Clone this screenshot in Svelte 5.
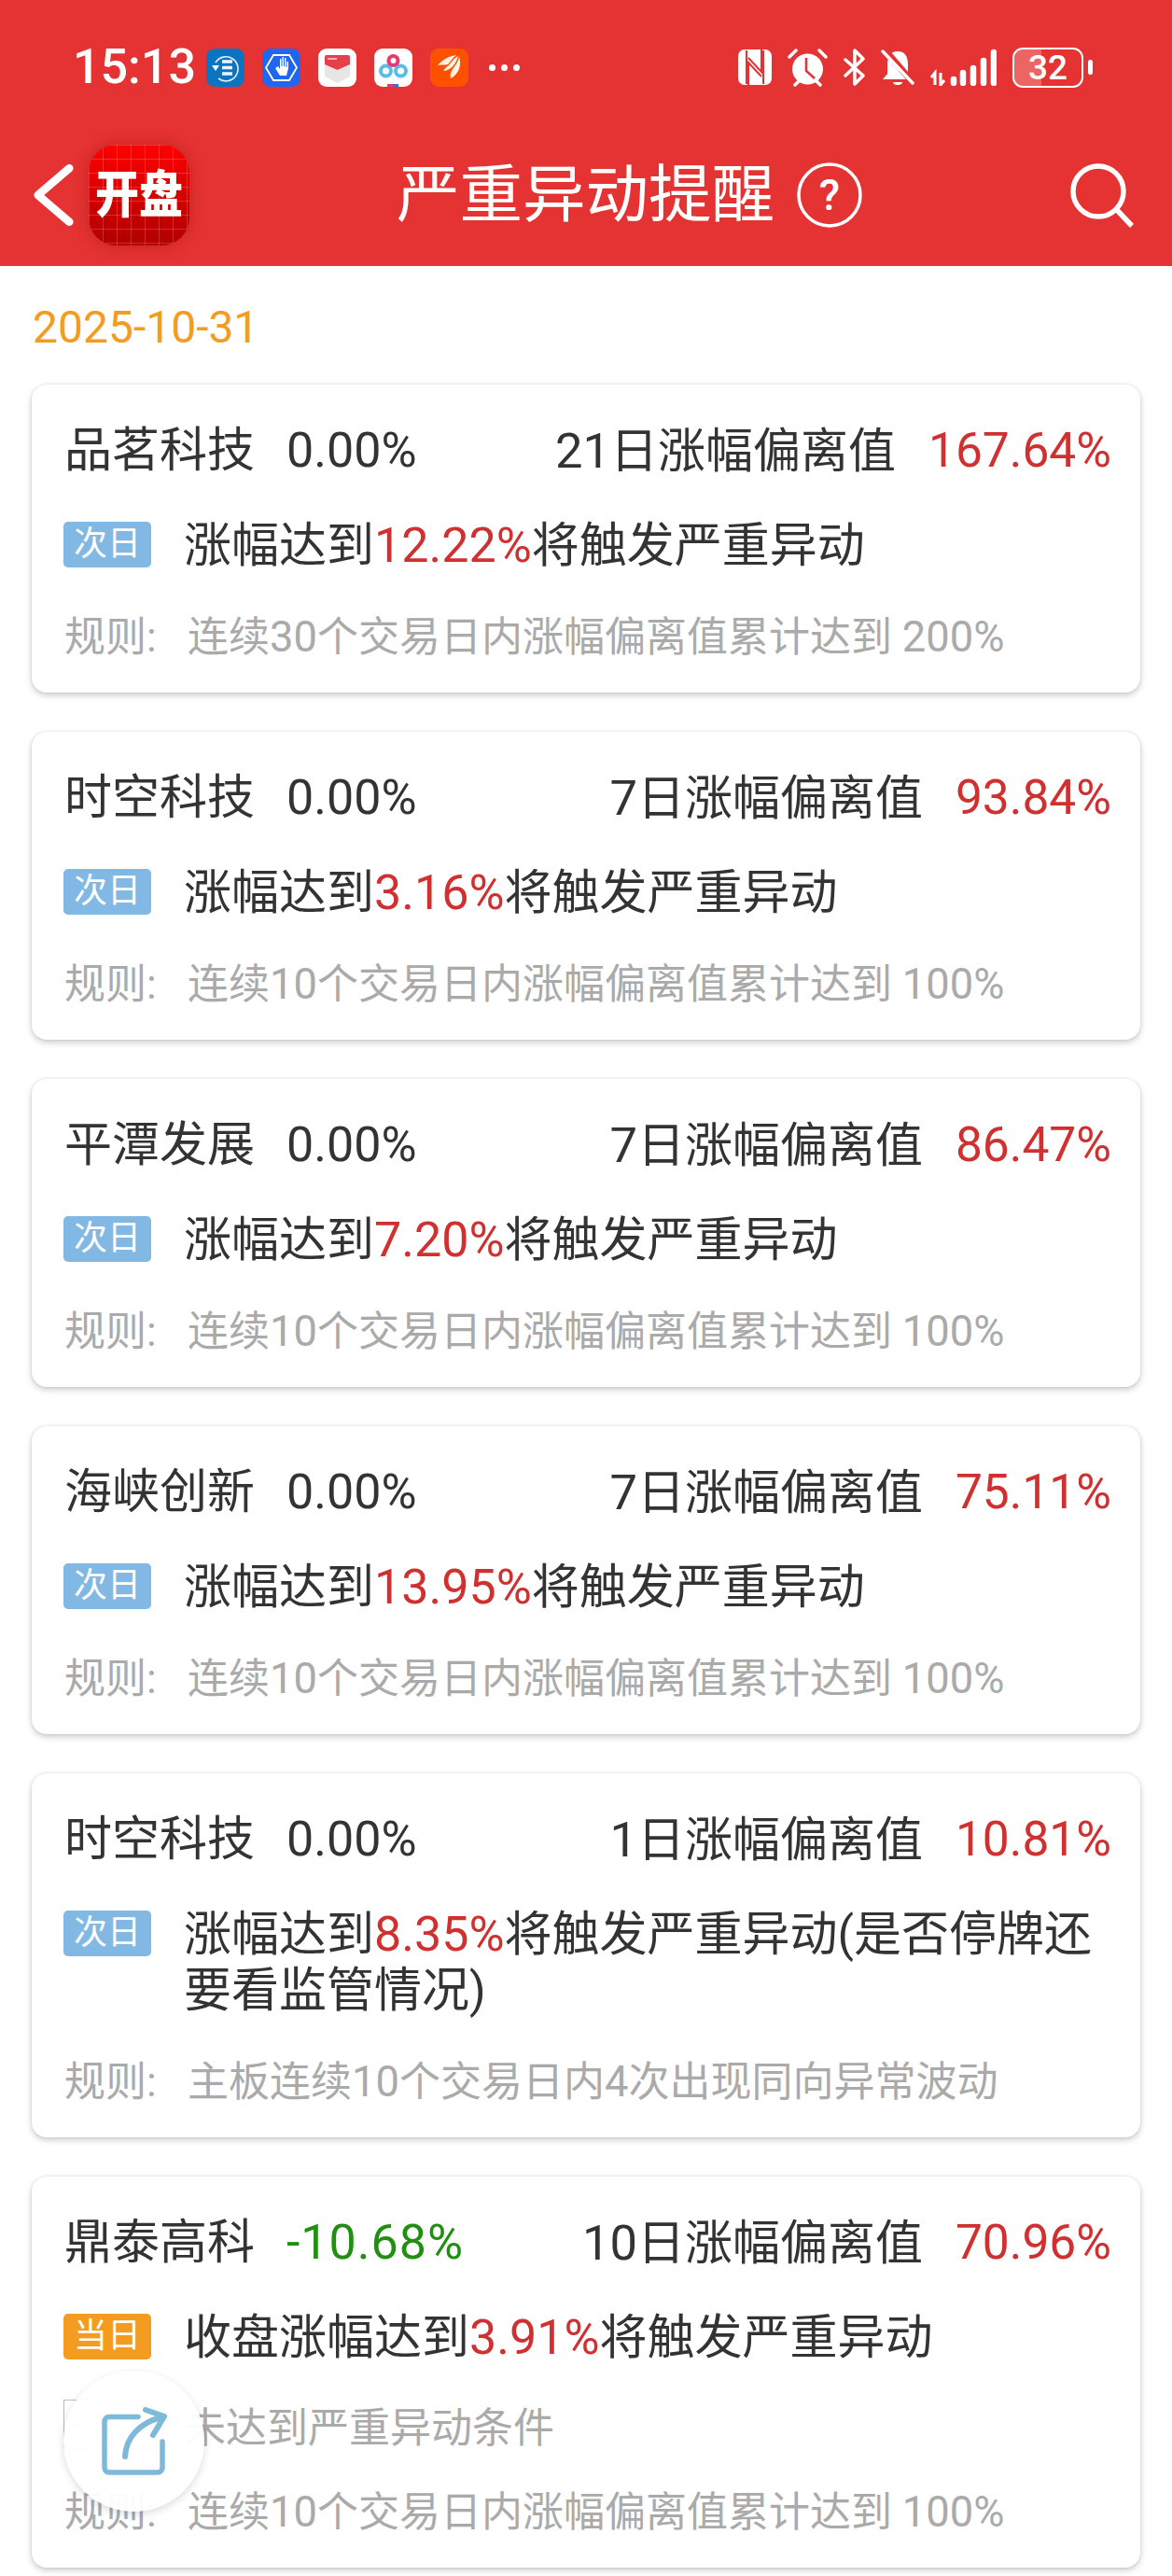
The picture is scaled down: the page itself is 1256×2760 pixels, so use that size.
<script>
  const cards = [
    { name: '品茗科技', pct: '0.00%', label: '21日涨幅偏离值', val: '167.64%', pre: '涨幅达到', hit: '12.22%', post: '将触发严重异动', rule: '连续30个交易日内涨幅偏离值累计达到 200%' },
    { name: '时空科技', pct: '0.00%', label: '7日涨幅偏离值', val: '93.84%', pre: '涨幅达到', hit: '3.16%', post: '将触发严重异动', rule: '连续10个交易日内涨幅偏离值累计达到 100%' },
    { name: '平潭发展', pct: '0.00%', label: '7日涨幅偏离值', val: '86.47%', pre: '涨幅达到', hit: '7.20%', post: '将触发严重异动', rule: '连续10个交易日内涨幅偏离值累计达到 100%' },
    { name: '海峡创新', pct: '0.00%', label: '7日涨幅偏离值', val: '75.11%', pre: '涨幅达到', hit: '13.95%', post: '将触发严重异动', rule: '连续10个交易日内涨幅偏离值累计达到 100%' },
    { name: '时空科技', pct: '0.00%', label: '1日涨幅偏离值', val: '10.81%', pre: '涨幅达到', hit: '8.35%', post: '将触发严重异动(是否停牌还要看监管情况)', rule: '主板连续10个交易日内4次出现同向异常波动' },
    { name: '鼎泰高科', pct: '-10.68%', down: true, label: '10日涨幅偏离值', val: '70.96%', today: true, pre: '收盘涨幅达到', hit: '3.91%', post: '将触发严重异动', note: '未达到严重异动条件', rule: '连续10个交易日内涨幅偏离值累计达到 100%' }
  ];
  const parts = (s) => s.split(/([0-9%]+)/).map((t, i) => ({ t, num: i % 2 === 1 }));
</script>

{#snippet mixed(s)}{#each parts(s) as p}{#if p.num}<span class="n">{p.t}</span>{:else}{p.t}{/if}{/each}{/snippet}

<div class="screen">
  <header class="head">
    <div class="status">
      <span class="time">15:13</span>
      <div class="apps">
        <svg class="app" viewBox="0 0 41 41"><rect width="41" height="41" rx="9" fill="#0b74c0"/><path d="M10 15a13 13 0 1 1 3 17" fill="none" stroke="#d8efff" stroke-width="1.600"/><path d="M6 18h8l-4 6z" fill="#fff"/><path d="M17 14h11M17 20.500h11M17 27h11" stroke="#e8f5ff" stroke-width="3.500"/></svg>
        <svg class="app" viewBox="0 0 41 41"><rect width="41" height="41" rx="9" fill="#1f66f0"/><path d="M12 7h17l8 13.500-8 13.500H12L4 20.500z" fill="none" stroke="#fff" stroke-width="1.800"/><path d="M14 21l5 8h7l2-8v-7h-1.500v6h-1V10h-1.500v9h-1V9h-1.500v10h-1v-8h-1.500v11l-2-3z" fill="#fff"/></svg>
        <svg class="app" viewBox="0 0 41 41"><rect width="41" height="41" rx="9" fill="#fff"/><path d="M7 17l13.500 6L34 17v13l-13.500 7L7 30z" fill="#e6e6e6"/><path d="M7 9a2 2 0 0 1 2-2h23a2 2 0 0 1 2 2v8l-13.500 6L7 17z" fill="#e8404a"/><path d="M10 11h10" stroke="#ffd5d5" stroke-width="1.500"/></svg>
        <svg class="app" viewBox="0 0 41 41"><rect width="41" height="41" rx="9" fill="#fff"/><circle cx="12.500" cy="24" r="5.500" fill="none" stroke="#58bde8" stroke-width="4"/><circle cx="28.500" cy="24" r="5.500" fill="none" stroke="#58bde8" stroke-width="4"/><circle cx="20.500" cy="13" r="5" fill="none" stroke="#e6396e" stroke-width="4"/><rect x="14" y="38" width="6" height="3" fill="#e6396e"/><rect x="20" y="38" width="6" height="3" fill="#3c6fd8"/></svg>
        <svg class="app" viewBox="0 0 41 41"><rect width="41" height="41" rx="9" fill="#ff5000"/><path d="M8 18c6-7 13-10 20-11-4 3-7 8-9 10-4 1-8 0-11 1z" fill="#fff3e4"/><path d="M14 24c2-3 4-5 6-6 3-4 6-8 10-10-2 6-4 10-8 13-3 2-5 3-8 3z" fill="#fff3e4"/><path d="M22 32c-1-3 0-7 2-10 3-4 6-8 7-13 3 8 0 18-9 23z" fill="#fff3e4"/></svg>
        <span class="dots"><i></i><i></i><i></i></span>
      </div>
      <div class="sys">
        <svg class="nfc" viewBox="0 0 36 38"><rect width="36" height="38" rx="7" fill="#fff"/><path d="M11 38V14l14 15M25 0v24L11 9M9 1v36M27 1v36" fill="none" stroke="#e53232" stroke-width="2"/></svg>
        <svg class="alarm" viewBox="0 0 43 44"><circle cx="21.500" cy="24" r="16.500" fill="#fff"/><path d="M20 12v14l9 8" fill="none" stroke="#e53232" stroke-width="2.500"/><path d="M2 11l7-7M41 11l-7-7M8 41l4-4M35 41l-4-4" stroke="#fff" stroke-width="3.500" stroke-linecap="round"/></svg>
        <svg class="bt" viewBox="0 0 25 40"><path d="M3 12l19 17-9 9V2l9 9L3 29" fill="none" stroke="#fff" stroke-width="3.500" stroke-linejoin="round" stroke-linecap="round"/></svg>
        <svg class="bell" viewBox="0 0 36 40"><path d="M18 3c8 0 11 6 11 14v10l5 6H2l5-6V17C7 9 10 3 18 3z" fill="#fff"/><path d="M13 36a5 3 0 0 0 10 0z" fill="#fff"/><path d="M3 0l31 36" stroke="#e53232" stroke-width="7"/><path d="M2 3l32 34" stroke="#fff" stroke-width="3.500" stroke-linecap="round"/></svg>
        <svg class="signal" viewBox="0 0 72 40"><path d="M6 39V26l-4 5M12 26v13l4-5" stroke="#fff" stroke-width="3" fill="none"/><g stroke="#fff" stroke-width="6.500" stroke-linecap="round"><path d="M26 33v4M36 26v11M47 21v16M58 13v24M69 4v33"/></g></svg>
        <div class="batt"><div class="fill"></div><span>32</span></div>
        <i class="tip"></i>
      </div>
    </div>
    <div class="nav">
      <svg class="back" viewBox="0 0 48 72"><path d="M42 6L7 36l35 30" fill="none" stroke="#fff" stroke-width="9" stroke-linecap="round" stroke-linejoin="round"/></svg>
      <div class="logo"><b>开盘</b></div>
      <div class="title"><h1>严重异动提醒</h1>
        <svg class="help" viewBox="0 0 70 70"><circle cx="35" cy="35" r="33" fill="none" stroke="#fff" stroke-width="3.500"/><text x="35" y="51" text-anchor="middle" fill="#fff" font-size="46" font-weight="500" font-family="Roboto">?</text></svg>
      </div>
      <svg class="search" viewBox="0 0 70 70"><circle cx="31" cy="31" r="27" fill="none" stroke="#fff" stroke-width="5.500"/><path d="M51 51l16 17" stroke="#fff" stroke-width="5.500"/></svg>
    </div>
  </header>

  <div class="date">2025-10-31</div>

  <main class="list">
    {#each cards as c}
      <section class="card">
        <div class="top">
          <span class="name">{c.name}</span>
          <span class="pct" class:down={c.down}>{c.pct}</span>
          <span class="label">{@render mixed(c.label)}</span>
          <span class="val">{c.val}</span>
        </div>
        <div class="mid">
          <span class="tag" class:today={c.today}>{c.today ? '当日' : '次日'}</span>
          <p>{c.pre}<em>{c.hit}</em>{c.post}</p>
        </div>
        {#if c.note}
          <div class="note">
            <svg class="spark" viewBox="0 0 112 53"><rect x=".5" y=".5" width="111" height="52" fill="#fff" stroke="#bbb"/><path d="M4 38c8-18 14-14 20-2s12 6 18-8 14-14 20-6 14 10 22 2 14-6 24-4" fill="none" stroke="#ccc" stroke-width="2"/></svg>
            <span>{c.note}</span>
          </div>
        {/if}
        <div class="rule"><span>规则:</span><span>{@render mixed(c.rule)}</span></div>
      </section>
    {/each}
  </main>

  <div class="float">
    <svg viewBox="0 0 70 74"><path d="M39 10.500H8a5 5 0 0 0-5 5V65a5 5 0 0 0 5 5h52a5 5 0 0 0 5-5V37" fill="none" stroke="#7fb9d9" stroke-width="5.500" stroke-linecap="round"/><path d="M25 53C26 33 40 17 64 11" fill="none" stroke="#7fb9d9" stroke-width="6" stroke-linecap="round"/><path d="M47 3l20 7-12 20" fill="none" stroke="#7fb9d9" stroke-width="6" stroke-linecap="round" stroke-linejoin="round"/></svg>
  </div>
</div>

<style>
  :global(body) { margin: 0; background: #fff; }
  .screen { position: relative; width: 1256px; height: 2760px; overflow: hidden; background: #fff; font-family: Roboto, "Noto Sans CJK SC", sans-serif; color: #333; }
  .head { height: 285px; background: #e53232; color: #fff; box-sizing: border-box; padding-top: 50px; }
  .status { display: flex; align-items: center; height: 44px; padding-left: 78px; }
  .time { font-size: 52px; font-weight: 500; line-height: 44px; width: 143px; }
  .apps { display: flex; align-items: center; gap: 19px; width: 570px; }
  .app { width: 41px; height: 41px; flex: none; }
  .dots { display: flex; gap: 6px; margin-left: 3px; }
  .dots i { width: 7px; height: 7px; border-radius: 50%; background: #fff; }
  .sys { display: flex; align-items: center; }
  .nfc { width: 36px; height: 38px; margin-right: 17px; }
  .alarm { width: 43px; height: 44px; margin-right: 16px; }
  .bt { width: 25px; height: 40px; margin-right: 16px; }
  .bell { width: 36px; height: 40px; margin-right: 16px; }
  .signal { width: 72px; height: 40px; margin-right: 17px; }
  .batt { position: relative; width: 76px; height: 43px; box-sizing: border-box; border: 2.500px solid #fff; border-radius: 11px; overflow: hidden; display: flex; align-items: center; justify-content: center; font-size: 37px; font-weight: 500; }
  .batt .fill { position: absolute; left: 0; top: 0; bottom: 0; width: 40%; background: rgba(255,255,255,.25); }
  .batt span { position: relative; }
  .tip { width: 5px; height: 16px; border-radius: 3px; background: #fff; margin-left: 5px; }
  .nav { position: relative; display: flex; align-items: center; height: 108px; margin-top: 61px; padding-left: 34px; }
  .back { width: 46px; height: 70px; }
  .logo { width: 108px; height: 108px; margin-left: 15px; border-radius: 30px; background-color: #d80000; background-image: linear-gradient(rgba(255,255,255,.18) 1px, transparent 1px), linear-gradient(90deg, rgba(255,255,255,.18) 1px, transparent 1px), linear-gradient(#ff0000, #b00000); background-size: 15px 15px, 15px 15px, 100% 100%; box-shadow: 0 0 16px rgba(120,0,0,.3); display: flex; align-items: center; justify-content: center; color: #fff; }
  .logo b { font-size: 47px; font-weight: 900; line-height: 1; white-space: nowrap; transform: scaleY(1.15); }
  .title { display: flex; align-items: center; margin-left: 222px; }
  h1 { margin: 0; font-size: 67.500px; font-weight: 400; line-height: 1; white-space: nowrap; }
  .help { width: 70px; height: 70px; margin-left: 24px; }
  .search { width: 70px; height: 70px; margin-left: 222px; }
  .date { color: #f39c1f; font-size: 48px; line-height: 50px; padding: 41px 0 0 35px; height: 127px; box-sizing: border-box; }
  .list { display: flex; flex-direction: column; gap: 42px; padding: 0 34px; }
  .card { background: #fff; border-radius: 16px; box-shadow: 0 3px 7px rgba(0,0,0,.2), 0 0 3px rgba(0,0,0,.1); padding: 46px 31px 34px 35px; }
  .top { display: flex; align-items: center; height: 50px; font-size: 51px; line-height: 50px; white-space: nowrap; }
  .name { width: 238px; flex: none; }
  .pct { font-size: 52px; }
  .pct.down { color: #1f9010; letter-spacing: 1px; }
  .label { margin-left: auto; }
  .n { font-size: 1.03em; }
  .val { margin-left: 35px; color: #d03030; font-size: 51.500px; }
  .mid { display: flex; align-items: flex-start; margin-top: 47px; }
  .tag { flex: none; width: 94px; height: 49px; margin: 4px 35px 0 -1px; background: #82b8e4; color: #fff; border-radius: 5px; font-size: 36px; line-height: 49px; text-align: center; }
  .tag.today { background: #f39c1f; }
  .mid p { margin: 0; font-size: 51px; line-height: 60px; }
  em { font-style: normal; color: #d03030; font-size: 52px; line-height: 0; }
  .note { display: flex; align-items: center; height: 53px; margin-top: 36px; color: #aaa; font-size: 44px; }
  .spark { width: 112px; height: 53px; margin-left: -1px; flex: none; }
  .note span { margin-left: 18px; }
  .rule { display: flex; height: 50px; margin-top: 43px; color: #aaa; font-size: 44px; line-height: 50px; white-space: nowrap; }
  .rule span:first-child { width: 132px; }
  .rule .n { font-size: 1.03em; }
  .float { position: absolute; left: 68px; top: 2540px; width: 151px; height: 151px; border-radius: 50%; background: rgba(255,255,255,.95); box-shadow: 0 3px 8px rgba(0,0,0,.14); display: flex; align-items: center; justify-content: center; }
  .float svg { width: 70px; height: 74px; }
</style>
